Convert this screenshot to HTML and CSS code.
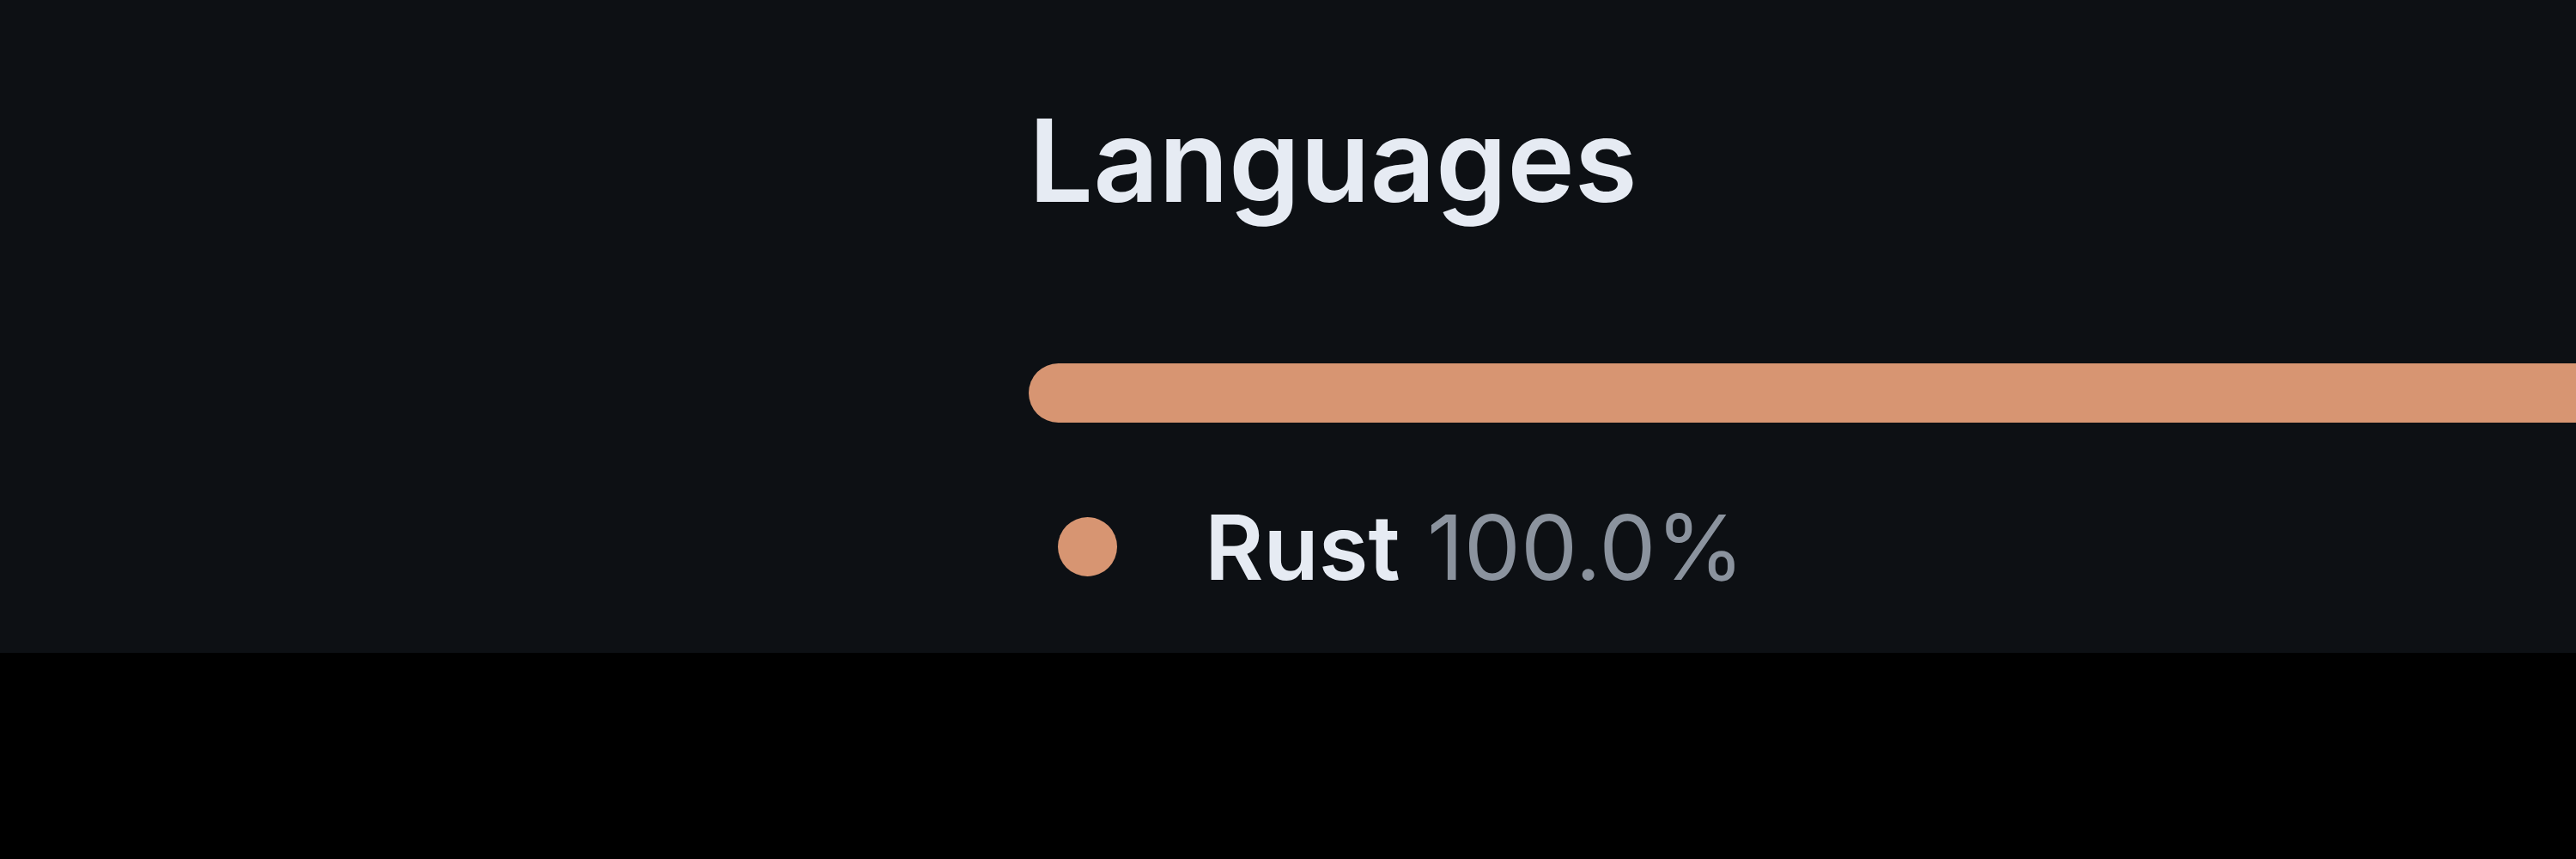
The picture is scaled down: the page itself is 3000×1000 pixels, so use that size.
FILE: index.html
```html
<!DOCTYPE html>
<html lang="en">
<head>
    <meta charset="UTF-8">
    <meta name="viewport" content="width=device-width, initial-scale=1">
    <title>Languages</title>
    <link rel="stylesheet" href="styles.css">
</head>
<body>
    <div class="layout">
        <div class="main"></div>
        <div class="sidebar">
            <h2 class="heading">Languages</h2>
            <div class="lang-bar">
                <span class="lang-bar-item" style="width: 100%"></span>
            </div>
            <ul class="lang-list">
                <li class="lang-item">
                    <span class="lang-dot"></span>
                    <span class="lang-name">Rust</span>
                    <span class="lang-percent">100.0%</span>
                </li>
            </ul>
        </div>
    </div>
</body>
</html>
```

FILE: styles.css
```css
body {
    margin: 0;
    background-color: #000;
    font-family: Inter, "Noto Sans", sans-serif;
}
.layout {
    display: flex;
    height: 760px;
    background-color: #0d1014;
    overflow: hidden;
}
.main {
    flex: 0 0 1198px;
}
.sidebar {
    flex: 1;
    min-width: 0;
}
.heading {
    margin: 120px 0 0 0;
    font-size: 133px;
    line-height: 1;
    font-weight: 600;
    color: #e6ebf3;
}
.lang-bar {
    display: flex;
    margin-top: 170px;
    height: 69px;
    width: calc(100% + 200px);
    border-radius: 35px;
    overflow: hidden;
}
.lang-bar-item {
    background-color: #d79572;
}
.lang-list {
    list-style: none;
    margin: 92px 0 0 0;
    padding: 0;
}
.lang-item {
    display: flex;
    align-items: center;
    font-size: 105px;
    line-height: 1;
    padding-left: 34px;
}
.lang-dot {
    width: 69px;
    height: 69px;
    border-radius: 50%;
    background-color: #d79572;
    margin-right: 102px;
}
.lang-name {
    font-weight: 600;
    color: #e6ebf3;
    margin-right: 0.3em;
}
.lang-percent {
    color: #8b939e;
}
```
